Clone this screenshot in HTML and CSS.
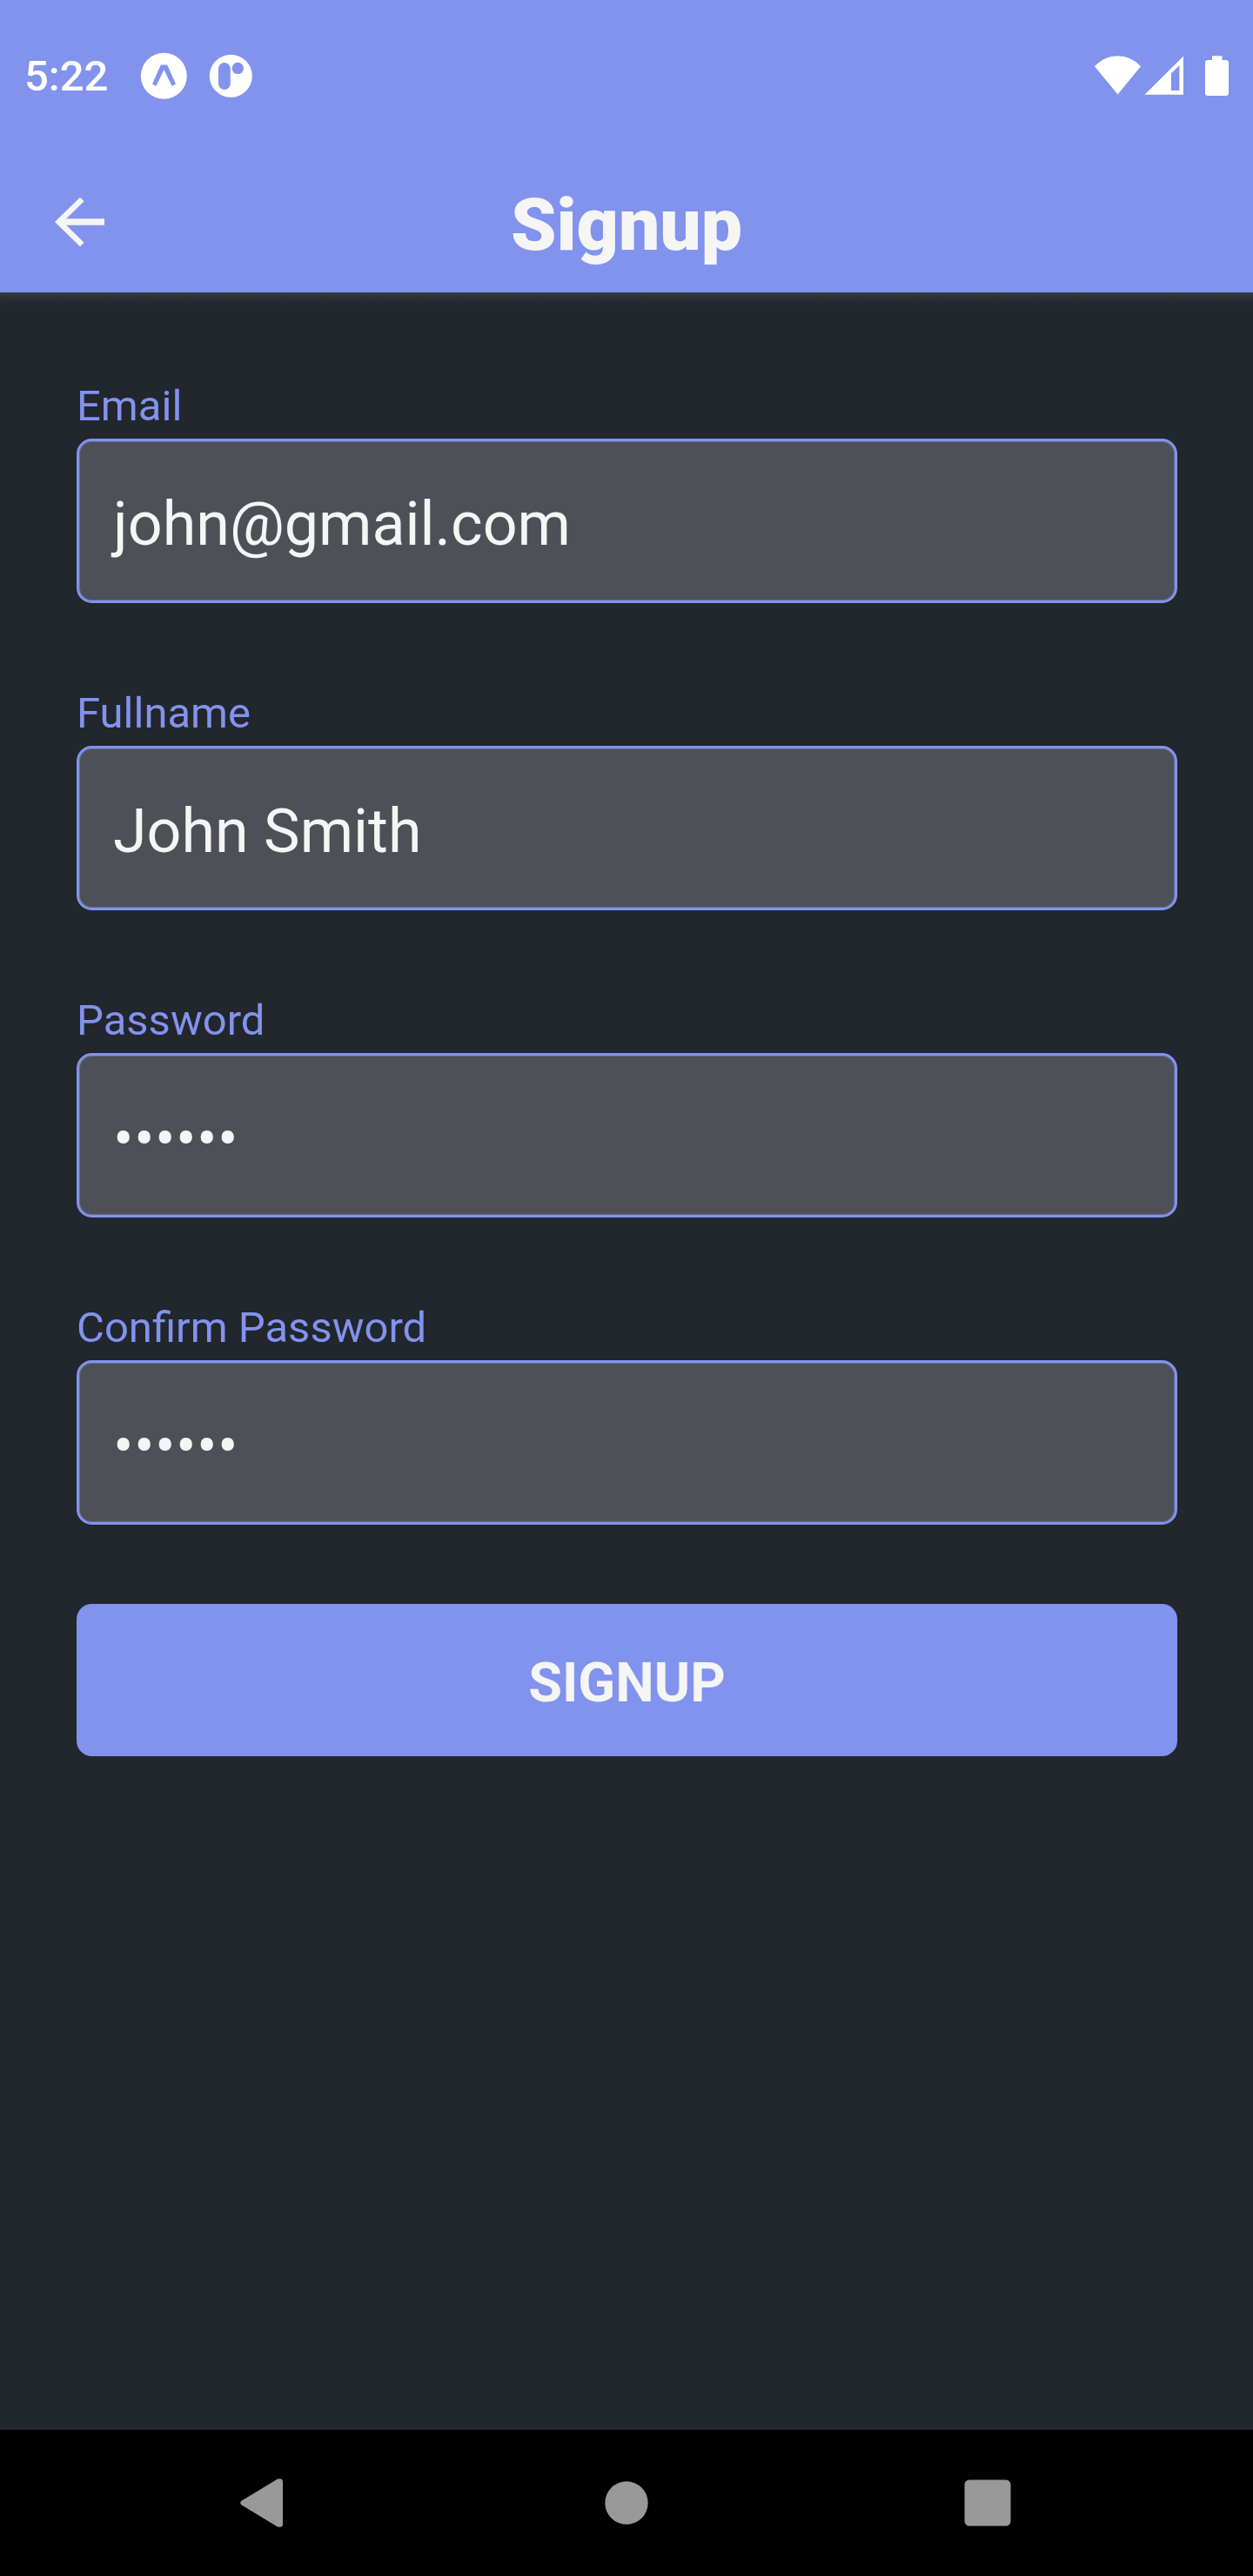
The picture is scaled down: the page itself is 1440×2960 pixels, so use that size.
FILE: index.html
```html
<!DOCTYPE html>
<html lang="en">
<head>
<meta charset="utf-8">
<title>Signup</title>
<link rel="stylesheet" href="styles.css">
</head>
<body>
<div class="screen">
  <header class="header">
    <div class="status">
      <span class="clock">5:22</span>
      <svg class="notifications" width="104" height="54" viewBox="161 59 130 54">
        <circle cx="188.3" cy="86.3" r="26.5" fill="#fff"/>
        <path d="M184.8 73.6h7.4l9.8 22-4.3 2.5-9.2-18.8-9.2 18.8-4.3-2.5z" fill="#8293ed"/>
        <circle cx="265.3" cy="86.3" r="24.5" fill="#fff"/>
        <rect x="251" y="71" width="13.8" height="31" rx="6.9" fill="#8293ed"/>
        <circle cx="273.3" cy="77.4" r="6.7" fill="#8293ed"/>
      </svg>
      <svg class="system" width="154" height="46" viewBox="1258 63 154 46" fill="#fff">
        <path d="M1258 75.2Q1269 63.2 1284.5 63.2T1311 75.2L1284.5 107.5z"/>
        <path fill-rule="evenodd" d="M1315.5 107.7L1360 63.4V107.7zM1346 83.2V103H1355.4V74.2z"/>
        <path d="M1393 68V63.2H1404.5V68H1409Q1412 68 1412 71V106Q1412 109 1409 109H1388Q1385 109 1385 106V71Q1385 68 1388 68z"/>
      </svg>
    </div>
    <div class="appbar">
      <svg class="back" width="60" height="60" viewBox="62 225 60 60" fill="none" stroke="#f5f5f5">
        <path d="M94.3 229L67.7 255L94.3 281" stroke-width="6.6"/>
        <path d="M70 255H120" stroke-width="7.6"/>
      </svg>
      <h1 class="title">Signup</h1>
    </div>
  </header>
  <main class="form">
    <div class="field"><div class="label">Email</div><div class="input">john@gmail.com</div></div>
    <div class="field"><div class="label">Fullname</div><div class="input">John Smith</div></div>
    <div class="field"><div class="label">Password</div><div class="input secret">••••••</div></div>
    <div class="field"><div class="label">Confirm Password</div><div class="input secret">••••••</div></div>
    <button class="submit" type="button">SIGNUP</button>
  </main>
  <nav class="navbar">
    <svg class="nav-back" width="49" height="56" viewBox="0 0 49 56"><path d="M1.8 25.6L43 .6Q49-1.2 49 4V52Q49 57.2 43 55.4L1.8 30.4Q-1.4 28 1.8 25.6z"/></svg>
    <svg class="nav-home" width="50" height="50" viewBox="0 0 50 50"><circle cx="25" cy="25" r="24.7"/></svg>
    <svg class="nav-recent" width="54" height="54" viewBox="0 0 54 54"><rect x=".5" y=".5" width="53" height="53" rx="5.5"/></svg>
  </nav>
</div>
</body>
</html>
```
FILE: styles.css
```css
* { box-sizing: border-box; }
body { margin: 0; font-family: Roboto, sans-serif; }
.screen {
  width: 1440px;
  height: 2960px;
  display: flex;
  flex-direction: column;
  background: #22262d;
}
.header { height: 336px; background: #8293ed; }
.status {
  height: 172px;
  padding: 1px 28px 0 28px;
  display: flex;
  align-items: center;
}
.clock {
  width: 133px;
  padding-top: 3px;
  font-size: 49px;
  line-height: 58px;
  font-weight: 500;
  color: #fff;
}
.notifications { width: 130px; height: 54px; }
.system { margin-left: auto; }
.appbar {
  height: 164px;
  padding: 2px 62px 0;
  display: grid;
  grid-template-columns: 60px 1fr 60px;
  align-items: center;
}
.title {
  margin: 0;
  padding-top: 7px;
  text-align: center;
  font-size: 84px;
  line-height: 98px;
  font-weight: 900;
  color: #f5f5f5;
}
.form {
  flex: 1;
  padding: 102px 87px 0 88px;
  background: linear-gradient(#343a42, #22262d 14px);
}
.field { margin-bottom: 98px; }
.label {
  margin-bottom: 9px;
  font-size: 49px;
  line-height: 57px;
  color: #8293ed;
}
.input {
  height: 189px;
  padding: 7px 39px 0;
  border: 3px solid #8293ed;
  border-radius: 17.5px;
  background: #4d5057;
  box-shadow: inset 0 0 0 1px #656c91;
  font-size: 70px;
  line-height: 176px;
  color: #f5f5f5;
}
.secret { letter-spacing: 0.4px; }
.submit {
  display: block;
  width: 100%;
  height: 175px;
  margin-top: -7px;
  padding: 6px 0 0;
  border: 0;
  border-radius: 17.5px;
  background: #8293ed;
  font: 700 63px/169px Roboto, sans-serif;
  color: #f5f5f5;
}
.navbar {
  height: 168px;
  padding: 0 278px 0 276px;
  display: grid;
  grid-template-columns: 49px 1fr 54px;
  align-items: center;
  background: #000;
  fill: #999;
}
.nav-home {
  justify-self: center;
  margin-left: 7px;
}
```
